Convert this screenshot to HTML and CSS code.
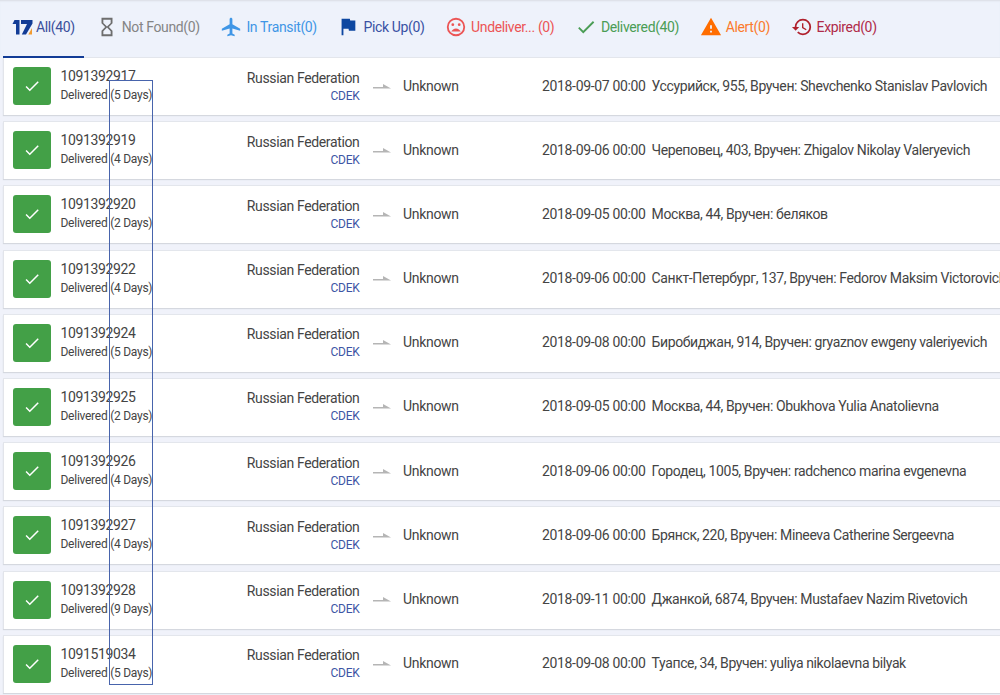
FILE: index.html
```
<!DOCTYPE html>
<html>
    <head>
        <meta charset="utf-8">
        <title>Tracking results</title>
        <link rel="stylesheet" href="styles.css">
    </head>
    <body>
        <div class="tabs">
            <div class="tab all active">
                <svg viewBox="0 0 22 22"><path fill="#123c96" d="M2.500 4h5v14.500H4V8H.500z"/><path fill="#123c96" d="M9 4h11.500v3.500L14 18.500H9.800L15 8H9z"/><path fill="#f29b30" d="M20 12v6.500h-3.700z"/></svg>
                <span>All(40)</span>
            </div>
            <div class="tab notfound">
                <svg viewBox="0 0 24 24"><path d="M6 2v6l4 4-4 4v6h12v-6l-4-4 4-4V2H6zm10 14.500V20H8v-3.500l4-4 4 4zm-4-5l-4-4V4h8v3.500l-4 4z"/></svg>
                <span>Not Found(0)</span>
            </div>
            <div class="tab transit">
                <svg viewBox="0 0 24 24"><path d="M22 16v-2l-8.500-5V3.500C13.500 2.670 12.830 2 12 2s-1.500.670-1.500 1.500V9L2 14v2l8.500-2.500V19L8 20.500V22l4-1 4 1v-1.500L13.500 19v-5.500L22 16z"/></svg>
                <span>In Transit(0)</span>
            </div>
            <div class="tab pickup">
                <svg viewBox="0 0 24 24"><path d="M14.400 5L14 3H5v18h2v-7h5.600l.4 2h7V5z"/></svg>
                <span>Pick Up(0)</span>
            </div>
            <div class="tab undelivered">
                <svg viewBox="0 0 24 24"><path d="M12 2a10 10 0 1 0 0 20 10 10 0 0 0 0-20zm0 18a8 8 0 1 1 0-16 8 8 0 0 1 0 16z"/><path d="M12 13.500c-2.330 0-4.310 1.460-5.110 3.500h10.220c-.8-2.040-2.780-3.500-5.110-3.500z"/><circle cx="8.500" cy="9.500" r="1.500"/><circle cx="15.500" cy="9.500" r="1.500"/></svg>
                <span>Undeliver... (0)</span>
            </div>
            <div class="tab delivered">
                <svg viewBox="0 0 24 24"><path d="M9 16.170L4.830 12l-1.420 1.410L9 19 21 7l-1.410-1.410z"/></svg>
                <span>Delivered(40)</span>
            </div>
            <div class="tab alert">
                <svg viewBox="0 0 24 24"><path d="M1 21h22L12 2 1 21zm12-3h-2v-2h2v2zm0-4h-2v-4h2v4z"/></svg>
                <span>Alert(0)</span>
            </div>
            <div class="tab expired">
                <svg viewBox="0 0 24 24"><path d="M13 3a9 9 0 0 0-9 9H1l3.890 3.890.070.140L9 12H6c0-3.870 3.130-7 7-7s7 3.130 7 7-3.130 7-7 7c-1.930 0-3.680-.790-4.940-2.060l-1.420 1.420A8.954 8.954 0 0 0 13 21a9 9 0 0 0 0-18zm-1 5v5l4.280 2.540.720-1.210-3.500-2.080V8H12z"/></svg>
                <span>Expired(0)</span>
            </div>
        </div>
        <div class="list"></div>
        <div class="days-frame"></div>
        <script>
    const list = document.getElementsByClassName('list')[0];
    const parcels = [
        ['1091392917', 5, '2018-09-07 00:00', 'Уссурийск, 955, Вручен: Shevchenko Stanislav Pavlovich'],
        ['1091392919', 4, '2018-09-06 00:00', 'Череповец, 403, Вручен: Zhigalov Nikolay Valeryevich'],
        ['1091392920', 2, '2018-09-05 00:00', 'Москва, 44, Вручен: беляков'],
        ['1091392922', 4, '2018-09-06 00:00', 'Санкт-Петербург, 137, Вручен: Fedorov Maksim Victorovich'],
        ['1091392924', 5, '2018-09-08 00:00', 'Биробиджан, 914, Вручен: gryaznov ewgeny valeriyevich'],
        ['1091392925', 2, '2018-09-05 00:00', 'Москва, 44, Вручен: Obukhova Yulia Anatolievna'],
        ['1091392926', 4, '2018-09-06 00:00', 'Городец, 1005, Вручен: radchenco marina evgenevna'],
        ['1091392927', 4, '2018-09-06 00:00', 'Брянск, 220, Вручен: Mineeva Catherine Sergeevna'],
        ['1091392928', 9, '2018-09-11 00:00', 'Джанкой, 6874, Вручен: Mustafaev Nazim Rivetovich'],
        ['1091519034', 5, '2018-09-08 00:00', 'Туапсе, 34, Вручен: yuliya nikolaevna bilyak']
    ];

    for (const [number, days, date, event] of parcels) {
        const row = document.createElement('div');
        row.className = 'row';
        row.innerHTML = `
            <div class="status"><svg viewBox="0 0 24 24"><path d="M9 16.170L4.830 12l-1.420 1.410L9 19 21 7l-1.410-1.410z"/></svg></div>
            <div class="parcel"><div class="number">${number}</div><div class="state">Delivered (${days} Days)</div></div>
            <div class="origin"><div class="country">Russian Federation</div><div class="carrier">CDEK</div></div>
            <svg class="arrow" viewBox="0 0 18 5"><path d="M0 3h10V0l8 4.500H0z"/></svg>
            <div class="dest">Unknown</div>
            <div class="event"><span class="date">${date}</span><span>${event}</span></div>`;
        list.appendChild(row);
    }
        </script>
    </body>
</html>
```
FILE: styles.css
```
body {
    margin: 0;
    height: 695px;
    overflow: hidden;
    position: relative;
    background: #f0f2fa;
    font-family: Roboto, sans-serif;
    font-size: 14px;
    letter-spacing: -0.36px;
    color: #444;
}

.tabs {
    display: flex;
    height: 58px;
    box-sizing: border-box;
    padding-left: 3px;
    background: #eef2fb;
    box-shadow: inset 0 2px 2px -1px #d9dce4;
}

.tab {
    display: flex;
    align-items: center;
    gap: 4px;
    box-sizing: border-box;
    padding: 0 10.300px 4px;
    white-space: nowrap;
}

.tab svg {
    width: 22px;
    height: 22px;
    fill: currentColor;
}

.tab.active {
    position: relative;
    margin-right: 1.500px;
    padding: 0 9px 2px;
    gap: 2px;
    border-bottom: 2px solid #123c96;
}

.all {color: #3b4f9c;}
.notfound {color: #858585;}
.notfound svg {color: #6e6e6e;}
.transit {color: #3f96e6;}
.pickup {color: #3951a3;}
.pickup svg {color: #0d47a1;}
.undelivered {color: #ec5555;}
.delivered {color: #4a9d55;}
.alert {color: #fb7a2c;}
.alert svg {color: #ff6d00;}
.expired {color: #b02a49;}
.expired svg {color: #b0202c;}

.list {
    display: flex;
    flex-direction: column;
    gap: 7.200px;
    padding-left: 3px;
}

.row {
    display: flex;
    align-items: center;
    height: 57px;
    box-sizing: border-box;
    padding: 0 0 1px 9px;
    background: #fff;
    border-left: 1px solid #e2e4ea;
    box-shadow: 0 1px 1px #d5d8df, 0 -1px 0 #e3e6ec;
    white-space: nowrap;
}

.row > * {flex-shrink: 0;}

.status {
    display: flex;
    align-items: center;
    justify-content: center;
    width: 38px;
    height: 38px;
    border-radius: 3px;
    background: #43a047;
}

.status svg {
    width: 18px;
    height: 18px;
    fill: #fff;
}

.parcel {
    width: 110px;
    margin-left: 9.500px;
}

.number, .state, .carrier {line-height: 19px;}

.country {
    line-height: 17px;
    padding-top: 3px;
}

.state, .carrier {
    font-size: 12px;
    letter-spacing: -0.26px;
}

.origin {
    width: 189px;
    text-align: right;
}

.carrier {color: #3d55a5;}

.arrow {
    width: 18px;
    height: 5px;
    margin-left: 13.500px;
    fill: #b5b5b5;
}

.dest {
    width: 139px;
    margin-left: 12px;
    padding-bottom: 1px;
    letter-spacing: -0.3px;
}

.event {
    display: flex;
    gap: 6px;
    padding-bottom: 1px;
    letter-spacing: -0.38px;
}

.date {letter-spacing: -0.34px;}

.days-frame {
    position: absolute;
    left: 109px;
    top: 80px;
    width: 44px;
    height: 605px;
    box-sizing: border-box;
    border: 1px solid #4864ac;
}
```
